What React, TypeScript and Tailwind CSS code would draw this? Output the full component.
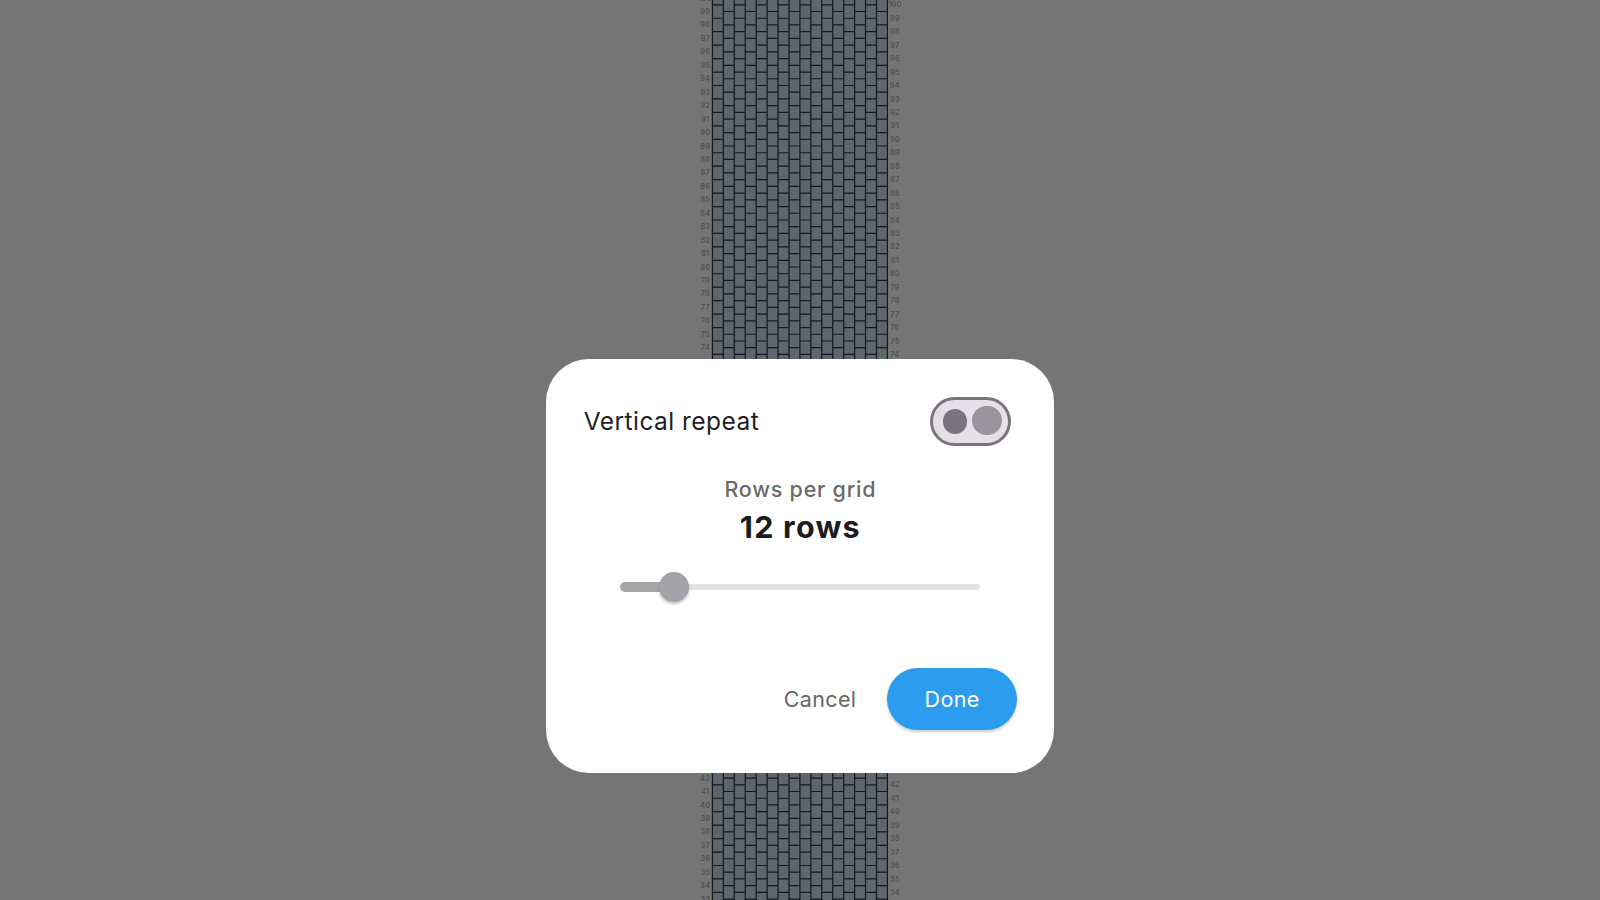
const PITCH = 13.4485;
const COLUMN = 10.94;
const COLUMNS = 16;
const LEFT = 14.4;

const rows = Array.from({ length: 68 }, (_, i) => i);
const columns = Array.from({ length: COLUMNS + 1 }, (_, i) => i);

function RowLabels({ x, top }: { x: number; top: number }) {
  // rows fully behind the dialog are skipped
  const visible = rows.filter((r) => {
    const y = top + r * PITCH;
    return y < 360 || y > 772;
  });

  return (
    <g textAnchor="middle" className="fill-[#505050] text-[7.4px] font-semibold">
      {visible.map((r) => (
        <text key={r} x={x} y={top + r * PITCH + 2.7} letterSpacing="0.2">
          {100 - r}
        </text>
      ))}
    </g>
  );
}

function BeadGrid() {
  // odd columns sit half a bead lower than even ones
  const joints = columns
    .slice(0, COLUMNS)
    .flatMap((c) =>
      rows.map((r) => {
        const y = (c % 2 === 0 ? 4.8 : 11.5) + r * PITCH;
        return `M${LEFT + c * COLUMN} ${y}h${COLUMN}`;
      }),
    )
    .join("");
  const edges = columns.map((c) => `M${LEFT + c * COLUMN} 0v900`).join("");

  return (
    <svg width="206" height="900" className="block shrink-0">
      <defs>
        <linearGradient id="beads" x1="0" x2="1" y1="0" y2="0">
          <stop offset="0" stopColor="#5e656e" />
          <stop offset="0.5" stopColor="#5f666a" />
          <stop offset="1" stopColor="#5e676c" />
        </linearGradient>
      </defs>
      <rect
        x={LEFT}
        width={COLUMN * COLUMNS}
        height="900"
        fill="url(#beads)"
      />
      <path d={joints + edges} stroke="#15181d" strokeWidth="1.2" />
      <RowLabels x={7.3} top={-2.1} />
      <RowLabels x={196.9} top={4.7} />
    </svg>
  );
}

function RepeatSwitch() {
  return (
    <button className="flex h-[49.5px] w-[80.6px] items-center rounded-full border-3 border-[#7a747d] bg-[#e5dfe7] pl-[9.5px]">
      <span className="size-[24.6px] rounded-full bg-[#7a747d]" />
      <span className="-mt-px ml-[4.7px] size-[29.4px] rounded-full bg-[#9a959c]" />
    </button>
  );
}

function RowsSlider() {
  return (
    <div className="flex h-[31px] w-[360px] items-center">
      <div className="h-[9.6px] w-[43px] rounded-l-full bg-[#a6a5a7]" />
      <div className="z-10 -ml-[4.5px] size-[30.6px] rounded-full bg-[#a5a1a8] shadow-[0_2px_3px_rgba(0,0,0,0.25)]" />
      <div className="-ml-1 h-[6.4px] flex-1 rounded-r-full bg-[#e3e1e2]" />
    </div>
  );
}

function RepeatDialog() {
  return (
    <div className="flex h-[414.3px] w-[508.6px] flex-col rounded-[43px] bg-white pt-[37.5px] pr-[37.3px] pl-[38px]">
      <div className="flex h-[49.5px] items-center justify-between pr-[6px]">
        <span className="text-[24.5px] leading-[30px] tracking-[0.45px] text-[#1f1f1f]">
          Vertical repeat
        </span>
        <RepeatSwitch />
      </div>
      <div className="mt-[29px] flex flex-col items-center">
        <span className="text-[21.5px] leading-7 font-medium tracking-[0.75px] text-[#6a6a6a]">
          Rows per grid
        </span>
        <span className="mt-[4px] text-[30.5px] leading-10 font-bold tracking-[1.2px] text-[#1c1c1c]">
          12 rows
        </span>
      </div>
      <div className="mt-[24.5px] flex justify-center">
        <RowsSlider />
      </div>
      <div className="mt-[65px] flex items-center justify-end gap-[31px]">
        <button className="pt-[2px] text-[21.5px] tracking-[0.35px] text-[#666666]">
          Cancel
        </button>
        <button className="h-[62px] w-[129.6px] rounded-full bg-[#2c9cef] pt-[2px] text-[21.5px] tracking-[0.4px] text-white shadow-[0_2px_3px_rgba(0,0,0,0.22)]">
          Done
        </button>
      </div>
    </div>
  );
}

function App() {
  return (
    <div className="relative h-[900px] w-[1600px] overflow-hidden bg-[#757575] font-['Inter',sans-serif]">
      <div className="flex h-full pl-[698px]">
        <BeadGrid />
      </div>
      <div className="absolute top-[359px] left-[545.7px]">
        <RepeatDialog />
      </div>
    </div>
  );
}

export default App;
